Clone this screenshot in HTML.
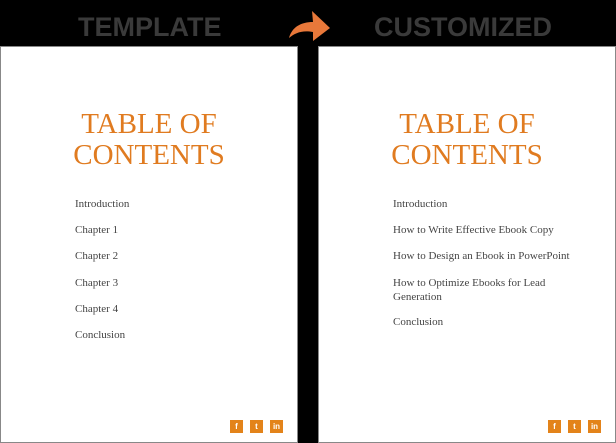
<!DOCTYPE html>
<html><head><style>
body{margin:0;width:616px;height:443px;background:#000;position:relative;overflow:hidden;font-family:"Liberation Serif",serif}
.h{position:absolute;top:12px;font-family:"Liberation Sans",sans-serif;font-weight:bold;font-size:27px;color:#3a3a3a;letter-spacing:0px}
.p{position:absolute;top:46px;height:397px;background:#fff;border:1px solid #888;box-sizing:border-box}
.t{position:absolute;top:62px;width:100%;text-align:center;color:#e07b20;font-size:29px;line-height:31px}
.i{position:absolute;left:74px;font-size:11px;color:#444;line-height:14px}
.s{position:absolute;top:373px;width:13px;height:13px;background:#e3831a;color:#fff;font:bold 8px "Liberation Sans",sans-serif;text-align:center;line-height:13px}
</style></head><body>
<div class="h" style="left:78px">TEMPLATE</div>
<div class="h" style="left:374px">CUSTOMIZED</div>
<svg style="position:absolute;left:288px;top:8px" width="43" height="34" viewBox="0 0 43 34"><path d="M1 30 C4 19 13 14 25 14 L24 3 L42 20 L25 33 L25 24 C14 22 7 25 1 30Z" fill="#e8783a"/></svg>
<div class="p" style="left:0;width:298px">
<div class="t">TABLE OF<br>CONTENTS</div>
<div class="i" style="top:150px">Introduction</div>
<div class="i" style="top:176px">Chapter 1</div>
<div class="i" style="top:202px">Chapter 2</div>
<div class="i" style="top:229px">Chapter 3</div>
<div class="i" style="top:255px">Chapter 4</div>
<div class="i" style="top:281px">Conclusion</div>
<div class="s" style="left:229px">f</div><div class="s" style="left:249px">t</div><div class="s" style="left:269px">in</div>
</div>
<div class="p" style="left:318px;width:298px">
<div class="t">TABLE OF<br>CONTENTS</div>
<div class="i" style="top:150px">Introduction</div>
<div class="i" style="top:176px">How to Write Effective Ebook Copy</div>
<div class="i" style="top:202px">How to Design an Ebook in PowerPoint</div>
<div class="i" style="top:229px">How to Optimize Ebooks for Lead<br>Generation</div>
<div class="i" style="top:268px">Conclusion</div>
<div class="s" style="left:229px">f</div><div class="s" style="left:249px">t</div><div class="s" style="left:269px">in</div>
</div>
</body></html>
